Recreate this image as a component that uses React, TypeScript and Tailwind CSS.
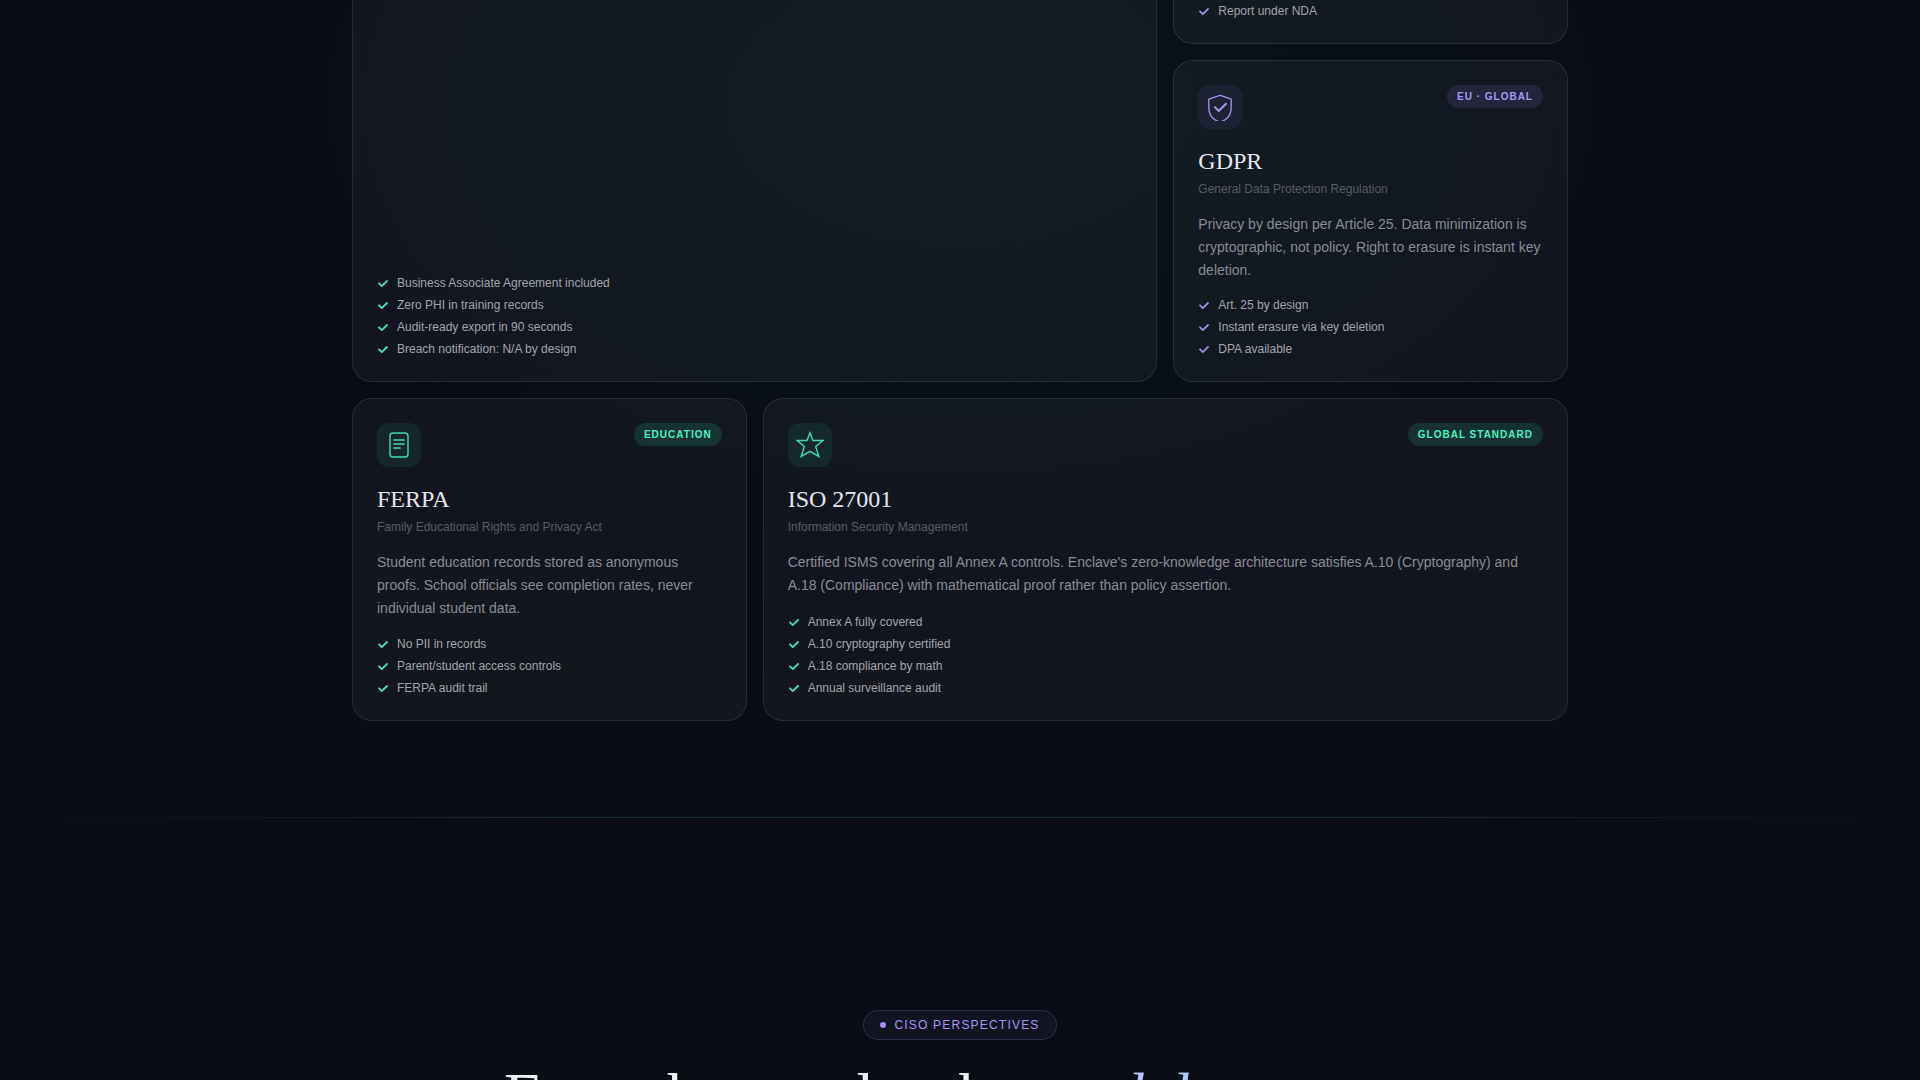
import React from 'react';
import clsx from 'clsx';

type Tone = 'mint' | 'violet';

interface FrameworkCardProps {
  title: string;
  subtitle: string;
  description: string;
  badge: string;
  points: string[];
  tone: Tone;
  icon: React.ReactNode;
  className?: string;
}

const hipaaPoints = [
  'Business Associate Agreement included',
  'Zero PHI in training records',
  'Audit-ready export in 90 seconds',
  'Breach notification: N/A by design',
];

const CheckIcon: React.FC<{ tone: Tone }> = ({ tone }) => (
  <svg
    viewBox="0 0 12 12"
    fill="none"
    stroke="currentColor"
    strokeWidth="1.8"
    strokeLinecap="round"
    strokeLinejoin="round"
    className={clsx('w-3 h-3 shrink-0', tone === 'mint' ? 'text-[#45e0b0]' : 'text-[#9a8fe6]')}
    aria-hidden="true"
  >
    <path d="M2 6.3l2.8 2.8L10 4" />
  </svg>
);

const ShieldIcon = () => (
  <svg viewBox="0 0 28 28" fill="none" stroke="currentColor" className="w-7 h-7" aria-hidden="true">
    <path d="M14 2.3L2.8 6.2V15c0 6.6 4.2 11.8 11.2 14.2 7-2.4 11.2-7.6 11.2-14.2V6.2z" strokeWidth="1.3" />
    <path d="M9 14.3l3.7 3.7 7.3-7.3" strokeWidth="2" strokeLinecap="round" strokeLinejoin="round" />
  </svg>
);

const DocumentIcon = () => (
  <svg viewBox="0 0 28 28" fill="none" stroke="currentColor" className="w-7 h-7" aria-hidden="true">
    <rect x="5" y="2" width="18" height="24" rx="3" strokeWidth="1.4" />
    <path d="M9 9h10M9 13h10M9 17h6" strokeWidth="1.7" strokeLinecap="round" />
  </svg>
);

const StarIcon = () => (
  <svg viewBox="0 0 28 28" fill="none" stroke="currentColor" className="w-7 h-7" aria-hidden="true">
    <path
      d="M14 1.8l3 7.7h9.9l-7.2 6 3.1 9.9-8.8-5.1-8.8 5.1 3.1-9.9-7.2-6H11z"
      strokeWidth="1.4"
    />
  </svg>
);

const CheckList: React.FC<{ points: string[]; tone: Tone }> = ({ points, tone }) => (
  <ul className="mt-auto flex flex-col gap-1.5">
    {points.map(point => (
      <li key={point} className="flex items-center gap-2 text-xs text-[#a3a5ac]">
        <CheckIcon tone={tone} />
        {point}
      </li>
    ))}
  </ul>
);

const FrameworkCard: React.FC<FrameworkCardProps> = ({
  title,
  subtitle,
  description,
  badge,
  points,
  tone,
  icon,
  className,
}) => (
  <article className={clsx('flex flex-col rounded-[20px] border border-white/9 bg-white/4 p-6', className)}>
    <div className="flex items-start justify-between">
      <div
        className={clsx(
          'flex w-11 h-11 items-center justify-center rounded-xl',
          tone === 'mint' ? 'bg-[#3dffc0]/8 text-[#43dcae]' : 'bg-[#a78bfa]/8 text-[#a295f0]'
        )}
      >
        {icon}
      </div>
      <span
        className={clsx(
          'rounded-full px-2.5 py-1 text-[10px] leading-[15px] font-bold tracking-widest',
          tone === 'mint' ? 'bg-[#3dffc0]/12 text-[#45f5bd]' : 'bg-[#a78bfa]/12 text-[#ab98f5]'
        )}
      >
        {badge}
      </span>
    </div>
    <h3 className="mt-[18px] font-['Liberation_Serif',serif] text-2xl leading-7 text-[#e6e7ed]">{title}</h3>
    <p className="mt-1.5 text-xs text-[#585b63]">{subtitle}</p>
    <p className="mt-4 mb-[15px] text-sm leading-[23px] text-[#898c94]">{description}</p>
    <CheckList points={points} tone={tone} />
  </article>
);

export default function App() {
  return (
    <div className="h-screen overflow-hidden bg-[#0a0d14] bg-[radial-gradient(ellipse_940px_580px_at_50%_105px,#09131a_0%,#091018_45%,#090c17_75%,#090c16_88%,#0a0d14_100%)] font-['Liberation_Sans',sans-serif] text-white">
      <section className="px-6 pb-24">
        <div className="mx-auto grid max-w-[1216px] grid-cols-3 grid-rows-[44px_auto_minmax(323px,auto)] gap-4">
          <article className="col-span-2 row-span-2 flex flex-col rounded-b-[20px] border border-t-0 border-white/9 bg-white/4 p-6">
            <CheckList points={hipaaPoints} tone="mint" />
          </article>

          <article className="flex flex-col justify-end rounded-b-[20px] border border-t-0 border-white/9 bg-white/4 px-6 pb-6">
            <CheckList points={['Report under NDA']} tone="violet" />
          </article>

          <FrameworkCard
            title="GDPR"
            subtitle="General Data Protection Regulation"
            description="Privacy by design per Article 25. Data minimization is cryptographic, not policy. Right to erasure is instant key deletion."
            badge="EU · GLOBAL"
            points={['Art. 25 by design', 'Instant erasure via key deletion', 'DPA available']}
            tone="violet"
            icon={<ShieldIcon />}
          />

          <FrameworkCard
            title="FERPA"
            subtitle="Family Educational Rights and Privacy Act"
            description="Student education records stored as anonymous proofs. School officials see completion rates, never individual student data."
            badge="EDUCATION"
            points={['No PII in records', 'Parent/student access controls', 'FERPA audit trail']}
            tone="mint"
            icon={<DocumentIcon />}
          />

          <FrameworkCard
            title="ISO 27001"
            subtitle="Information Security Management"
            description="Certified ISMS covering all Annex A controls. Enclave's zero-knowledge architecture satisfies A.10 (Cryptography) and A.18 (Compliance) with mathematical proof rather than policy assertion."
            badge="GLOBAL STANDARD"
            points={[
              'Annex A fully covered',
              'A.10 cryptography certified',
              'A.18 compliance by math',
              'Annual surveillance audit',
            ]}
            tone="mint"
            icon={<StarIcon />}
            className="col-span-2"
          />
        </div>
      </section>

      <div className="h-px bg-[linear-gradient(90deg,transparent_3%,#172c35_30%,#172f33_70%,transparent_97%)]" />

      <section className="flex flex-col items-center px-6 pt-48 text-center">
        <div className="flex items-center gap-2 rounded-full border border-[#a78bfa]/20 bg-[#a78bfa]/6 px-4 py-1.5 text-xs tracking-widest text-[#a594f5]">
          <span className="w-1.5 h-1.5 rounded-full bg-[#a78bfa]" />
          CISO PERSPECTIVES
        </div>
        <h2 className="mt-5 font-['Liberation_Serif',serif] text-[64px] leading-[72px] tracking-tight text-[#eeeff4]">
          From the people who{' '}
          <em className="bg-linear-to-r from-[#c4b5f5] via-[#a5d0f5] to-[#7fe6ff] bg-clip-text text-transparent">
            read documents
          </em>
        </h2>
      </section>
    </div>
  );
}
